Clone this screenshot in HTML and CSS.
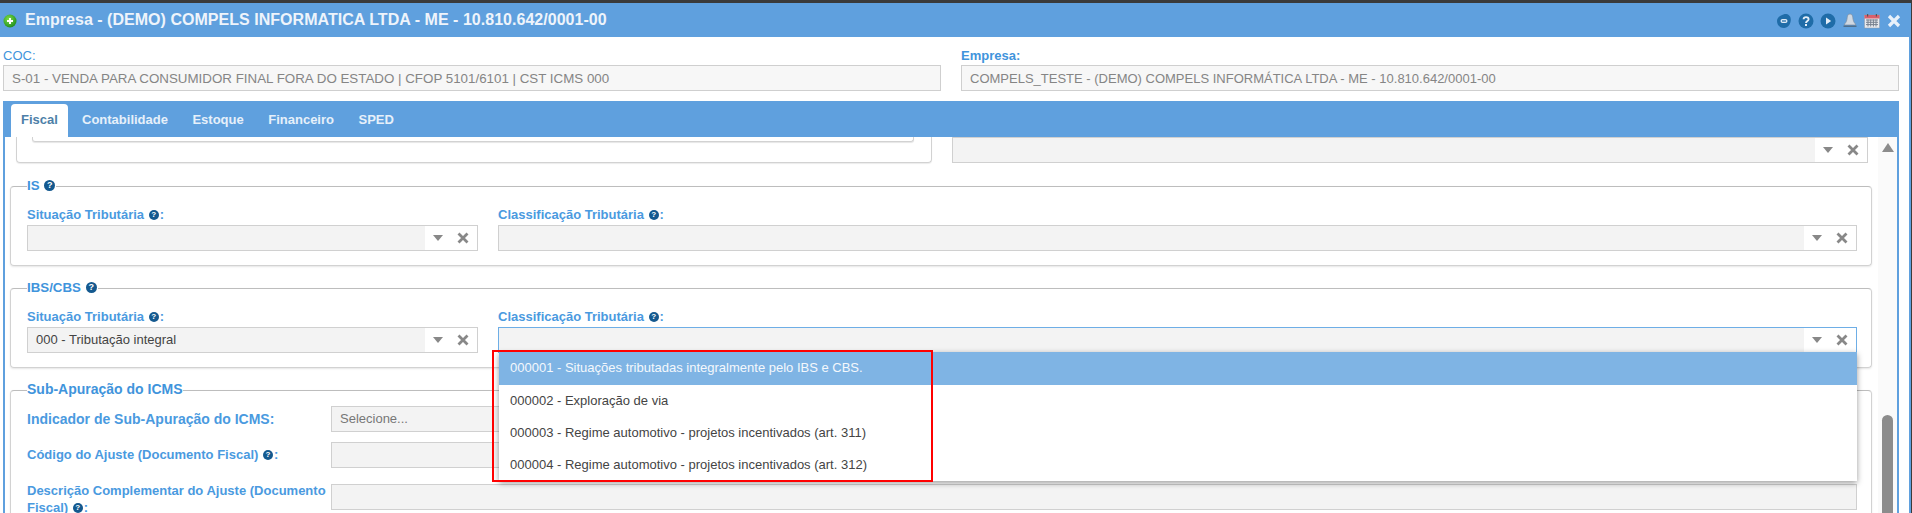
FILE: index.html
```html
<!DOCTYPE html>
<html lang="pt-BR">
<head>
<meta charset="utf-8">
<title>Empresa</title>
<link rel="stylesheet" href="styles.css">
</head>
<body>
<div class="window">
  <header class="titlebar">
    <svg class="title-icon" viewBox="0 0 14 14"><defs><radialGradient id="g" cx=".4" cy=".35" r=".7"><stop offset="0" stop-color="#7fe04a"/><stop offset="1" stop-color="#1c8a1c"/></radialGradient></defs><circle cx="7" cy="7" r="6.5" fill="url(#g)"/><path d="M7 4v6M4 7h6" stroke="#fff" stroke-width="2"/></svg>
    <h1 class="title">Empresa - (DEMO) COMPELS INFORMATICA LTDA - ME - 10.810.642/0001-00</h1>
    <div class="tools">
      <svg class="tool" viewBox="0 0 16 16"><path d="M8 1.200c3.500-.8 7 1.500 6.800 5.500C14.800 11 12 15 8 15c-4 0-7-3-7-7 0-3.500 3-5.500 7-6.800z" fill="#1f6ca8"/><rect x="4.500" y="6" width="7" height="4" rx="2" fill="#dce9f5"/><rect x="6" y="7.400" width="4" height="1.200" fill="#1f6ca8"/></svg>
      <svg class="tool" viewBox="0 0 16 16"><circle cx="8" cy="8" r="7.500" fill="#1f6ca8"/><path d="M5.600 6.200C5.600 3.400 10.600 3.400 10.600 6.200 10.600 8 8 8 8 10" fill="none" stroke="#e4eef8" stroke-width="1.900"/><rect x="7" y="11" width="2" height="2" fill="#e4eef8"/></svg>
      <svg class="tool" viewBox="0 0 16 16"><circle cx="8" cy="8" r="7.500" fill="#1f6ca8"/><path d="M6 4.600v6.800L11.200 8z" fill="#e4eef8"/></svg>
      <svg class="tool" viewBox="0 0 16 16"><path d="M8 1c2 0 2.600 1.600 2.800 3.500.3 3 1 5 2.700 6.500v1h-11v-1c1.700-1.500 2.400-3.500 2.700-6.500C5.400 2.600 6 1 8 1z" fill="#cfd8e2" stroke="#7c8ea0" stroke-width=".7"/><rect x="1.500" y="12.500" width="13" height="1.500" fill="#4f6f8c"/></svg>
      <svg class="tool" viewBox="0 0 16 16"><rect x="0.500" y="2" width="15" height="13" fill="#e8eaee" stroke="#8d97a5" stroke-width=".5"/><rect x="0.500" y="2" width="15" height="3.500" fill="#d9606c"/><rect x="3" y="1" width="1.200" height="2.500" fill="#555"/><rect x="11.800" y="1" width="1.200" height="2.500" fill="#555"/><path d="M2 7h12M2 9.300h12M2 11.600h12M4 6.500v7M6.700 6.500v7M9.400 6.500v7M12 6.500v7" stroke="#77818f" stroke-width="1"/></svg>
      <svg class="tool tool-close" viewBox="0 0 14 14"><path d="M2 2l10 10M12 2L2 12" stroke="#e8f1fa" stroke-width="3.200"/></svg>
    </div>
  </header>

  <main class="main">
    <div class="top-grid">
      <div>
        <label class="top-label">COC:</label>
        <div class="readonly readonly-coc">S-01 - VENDA PARA CONSUMIDOR FINAL FORA DO ESTADO | CFOP 5101/6101 | CST ICMS 000</div>
      </div>
      <div>
        <label class="top-label top-label-bold">Empresa:</label>
        <div class="readonly">COMPELS_TESTE - (DEMO) COMPELS INFORMÁTICA LTDA - ME - 10.810.642/0001-00</div>
      </div>
    </div>

    <section class="tabs-panel">
      <nav class="tabbar">
        <a class="tab tab-active">Fiscal</a>
        <a class="tab">Contabilidade</a>
        <a class="tab">Estoque</a>
        <a class="tab">Financeiro</a>
        <a class="tab">SPED</a>
      </nav>
      <div class="panel-body">
        <div class="content">
          <div class="fragment">
            <div class="outer-card"><div class="inner-card"></div></div>
            <div class="select select-fragment">
              <div class="select-value"></div>
              <div class="select-actions">
                <span class="caret"></span>
                <svg class="clear" viewBox="0 0 12 12"><path d="M1.500 1.500l9 9M10.500 1.500l-9 9" stroke="#888" stroke-width="2.800"/></svg>
              </div>
            </div>
          </div>

          <fieldset class="group">
            <legend class="legend">IS <span class="help help-legend">?</span></legend>
            <div class="field-grid">
              <div class="field">
                <label class="label">Situação Tributária <span class="help">?</span>:</label>
                <div class="select">
                  <div class="select-value"></div>
                  <div class="select-actions">
                    <span class="caret"></span>
                    <svg class="clear" viewBox="0 0 12 12"><path d="M1.500 1.500l9 9M10.500 1.500l-9 9" stroke="#888" stroke-width="2.800"/></svg>
                  </div>
                </div>
              </div>
              <div class="field">
                <label class="label">Classificação Tributária <span class="help">?</span>:</label>
                <div class="select">
                  <div class="select-value"></div>
                  <div class="select-actions">
                    <span class="caret"></span>
                    <svg class="clear" viewBox="0 0 12 12"><path d="M1.500 1.500l9 9M10.500 1.500l-9 9" stroke="#888" stroke-width="2.800"/></svg>
                  </div>
                </div>
              </div>
            </div>
          </fieldset>

          <fieldset class="group">
            <legend class="legend">IBS/CBS <span class="help help-legend">?</span></legend>
            <div class="field-grid">
              <div class="field">
                <label class="label">Situação Tributária <span class="help">?</span>:</label>
                <div class="select">
                  <div class="select-value">000 - Tributação integral</div>
                  <div class="select-actions">
                    <span class="caret"></span>
                    <svg class="clear" viewBox="0 0 12 12"><path d="M1.500 1.500l9 9M10.500 1.500l-9 9" stroke="#888" stroke-width="2.800"/></svg>
                  </div>
                </div>
              </div>
              <div class="field">
                <label class="label">Classificação Tributária <span class="help">?</span>:</label>
                <div class="select select-open">
                  <div class="select-value"></div>
                  <div class="select-actions">
                    <span class="caret"></span>
                    <svg class="clear" viewBox="0 0 12 12"><path d="M1.500 1.500l9 9M10.500 1.500l-9 9" stroke="#888" stroke-width="2.800"/></svg>
                  </div>
                  <ul class="dropdown">
                    <li class="option option-active">000001 - Situações tributadas integralmente pelo IBS e CBS.</li>
                    <li class="option">000002 - Exploração de via</li>
                    <li class="option">000003 - Regime automotivo - projetos incentivados (art. 311)</li>
                    <li class="option">000004 - Regime automotivo - projetos incentivados (art. 312)</li>
                    <li class="annotation"></li>
                  </ul>
                </div>
              </div>
            </div>
          </fieldset>

          <fieldset class="group group-sub">
            <legend class="legend legend-sub">Sub-Apuração do ICMS</legend>
            <div class="row">
              <label class="label label-large">Indicador de Sub-Apuração do ICMS:</label>
              <div class="input input-placeholder">Selecione...</div>
            </div>
            <div class="row">
              <label class="label">Código do Ajuste (Documento Fiscal) <span class="help">?</span>:</label>
              <div class="input"></div>
            </div>
            <div class="row row-tall">
              <label class="label label-wrap">Descrição Complementar do Ajuste (Documento Fiscal) <span class="help">?</span>:</label>
              <div class="input input-top"></div>
            </div>
          </fieldset>
        </div>
        <aside class="scroller">
          <span class="scroll-up"></span>
          <span class="scroll-thumb"></span>
        </aside>
      </div>
    </section>
  </main>
</div>
</body>
</html>
```

FILE: styles.css
```css
* { box-sizing: border-box; }
html, body { margin: 0; height: 513px; overflow: hidden; background: #3a3a3a; }
body { font-family: "Liberation Sans", Arial, sans-serif; padding-top: 3px; }

.window { width: 1911px; height: 510px; display: flex; flex-direction: column; background: #fff; overflow: hidden; }

.titlebar { flex: none; height: 34px; background: #5fa0de; display: flex; align-items: center; padding-left: 3px; }
.title-icon { width: 14px; height: 14px; margin: 2px 8px 0 0; flex: none; }
.title { margin: 0; font-size: 16px; font-weight: bold; color: #eef4fb; letter-spacing: .03px; }
.tools { margin-left: auto; display: flex; align-items: center; gap: 6px; padding: 1px 10px 0 0; }
.tool { width: 16px; height: 16px; display: block; }
.tool-close { width: 14px; height: 14px; margin-left: 1px; }

.main { flex: 1; min-height: 0; display: flex; flex-direction: column; border-right: 2px solid #5fa0de; }

.top-grid { flex: none; display: grid; grid-template-columns: 938px 938px; column-gap: 20px; padding: 9px 0 0 3px; }
.top-label { display: block; height: 19px; line-height: 19px; font-size: 13px; color: #3f94dc; }
.top-label-bold { font-weight: bold; }
.readonly { height: 26px; line-height: 25px; border: 1px solid #cfcfcf; background: #f7f7f7; padding-left: 8px; font-size: 13px; color: #858585; white-space: nowrap; overflow: hidden; }
.readonly-coc { font-size: 13.350px; }

.tabs-panel { flex: 1; min-height: 0; margin: 10px 0 0 3px; width: 1896px; display: flex; flex-direction: column; }
.tabbar { flex: none; height: 36px; background: #5fa0de; display: flex; align-items: flex-end; padding-left: 8px; }
.tab { height: 33px; line-height: 31px; padding: 0 11px; margin-right: 2.500px; font-size: 13px; font-weight: bold; color: #e6f0fa; }
.tab-active { background: #fff; color: #4d7fa8; border-radius: 4px 4px 0 0; padding: 0 10px; margin-right: 3px; width: 57px; }

.panel-body { flex: 1; min-height: 0; display: flex; border-left: 2px solid #5fa0de; border-right: 2px solid #5fa0de; }
.content { flex: 1; min-width: 0; overflow: hidden; padding: 0 6px 0 5px; }

.fragment { height: 27px; display: flex; align-items: flex-start; }
.outer-card { width: 916px; height: 26px; margin-left: 6px; border: 1px solid #d2d2d2; border-top: 0; border-radius: 0 0 4px 4px; box-shadow: 0 1px 1px rgba(0,0,0,.08); padding: 0 17px 0 15px; }
.inner-card { height: 5px; border: 1px solid #d2d2d2; border-top: 0; border-radius: 0 0 3px 3px; box-shadow: 0 1px 1px rgba(0,0,0,.1); }
.select-fragment { width: 916px; height: 24px; margin-left: 20px; border-top: 0; }

.group { margin: 14px 0 0; padding: 13px 14px 14px 16px; min-width: 0; border: 1px solid #d2d2d2; border-top-color: #bdbdbd; border-radius: 4px; box-shadow: 0 1px 2px rgba(0,0,0,.1); }
.legend { padding: 0; height: 16px; line-height: 16px; font-size: 13.300px; font-weight: bold; color: #3f94dc; }
.legend-sub { font-size: 14px; line-height: 14px; }
.group-sub { padding-top: 8px; height: 140px; }

.field-grid { display: grid; grid-template-columns: 451px 1fr; column-gap: 20px; }
.field { min-width: 0; }
.label { display: block; font-size: 13px; font-weight: bold; color: #4a9adf; line-height: 18px; }
.label-large { font-size: 14px; }
.field .label { height: 18px; line-height: 16px; }

.help { display: inline-block; width: 10px; height: 10px; margin: 0 1px; border-radius: 50%; background: #14598f; color: #fff; font-size: 8px; line-height: 10px; text-align: center; font-weight: bold; vertical-align: 2px; }
.help-legend { width: 11px; height: 11px; line-height: 11px; font-size: 9px; }

.select { position: relative; height: 26px; display: flex; border: 1px solid #d0d0d0; background: #fff; }
.select-value { flex: 1; min-width: 0; background: #f3f3f3; line-height: 24px; padding-left: 8px; font-size: 13px; color: #444; }
.select-actions { flex: none; width: 52px; display: flex; align-items: center; padding-left: 8px; gap: 10px; }
.caret { width: 0; height: 0; border-left: 5px solid transparent; border-right: 5px solid transparent; border-top: 6px solid #888; }
.clear { width: 12px; height: 12px; margin-left: 4px; }
.select-open { border-color: #6eaee6; }

.dropdown { position: absolute; left: 0; right: -1px; top: 24px; margin: 0; padding: 0; list-style: none; background: #fff; box-shadow: 0 2px 6px rgba(0,0,0,.4); z-index: 5; }
.option { height: 32px; line-height: 32px; padding-left: 11px; font-size: 13px; color: #444; }
.option-active { background: #7fb4e4; color: #f4f8fc; height: 33px; }
.annotation { position: absolute; left: -7px; top: -2px; width: 441px; height: 132px; border: 2px solid #f00; }

.row { display: grid; grid-template-columns: 304px 1fr; align-items: center; height: 25px; margin-bottom: 11px; }
.row-tall { height: 34px; margin-top: 15px; align-items: start; }
.label-wrap { line-height: 17px; }
.input { height: 26px; border: 1px solid #d0d0d0; background: #f3f3f3; line-height: 24px; padding-left: 8px; font-size: 13px; color: #777; }
.input-top { margin-top: 2px; }

.scroller { flex: none; width: 19px; background: #fafafa; position: relative; }
.scroll-up { position: absolute; left: 4px; top: 6px; width: 0; height: 0; border-left: 6px solid transparent; border-right: 6px solid transparent; border-bottom: 9px solid #8c8c8c; }
.scroll-thumb { position: absolute; left: 4px; top: 278px; width: 11px; height: 120px; border-radius: 6px 6px 0 0; background: #8c8c8c; }
```
